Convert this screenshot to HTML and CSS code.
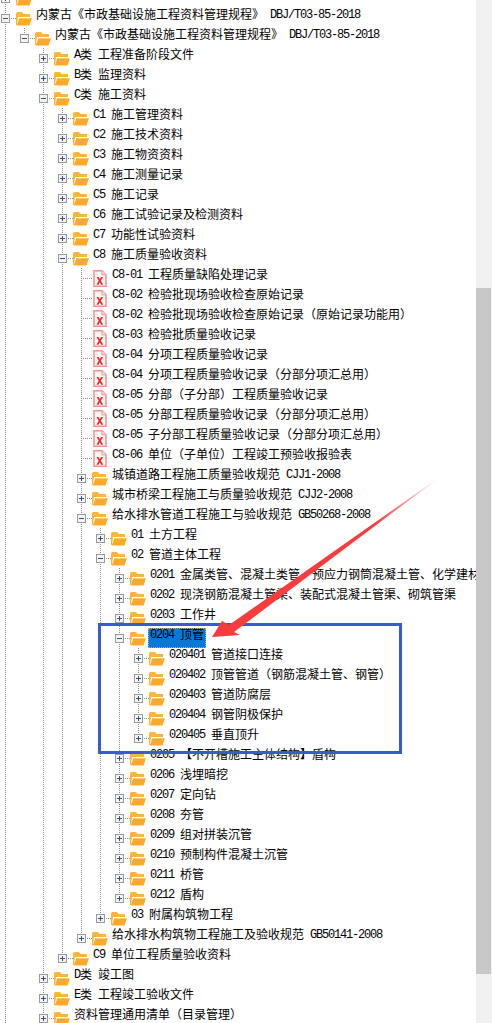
FILE: index.html
```html
<!DOCTYPE html>
<html lang="zh-CN">
<head>
    <meta charset="UTF-8">
    <meta name="viewport" content="width=device-width, initial-scale=1.0">
    <title>资料管理规程</title>
    <link rel="stylesheet" href="styles.css">
</head>
<body>
    <svg class="defs" width="0" height="0">
        <symbol id="plus" viewBox="0 0 9 9"><rect x=".5" y=".5" width="8" height="8" fill="#f4f4f0" stroke="#9a9a9a"/><path d="M2 4.500h5M4.500 2v5" stroke="#33508f"/></symbol>
        <symbol id="minus" viewBox="0 0 9 9"><rect x=".5" y=".5" width="8" height="8" fill="#f4f4f0" stroke="#9a9a9a"/><path d="M2 4.500h5" stroke="#33508f"/></symbol>
        <symbol id="folder" viewBox="0 0 16 14"><path d="M0 1.500 1 0h5l1.500 2H14v3H3.500L1 13H0z" fill="#fdb53c"/><path d="M2 5h12v1H3.400L1.500 12H1z" fill="#fff"/><path d="M3.500 6H16l-2.500 7.500H.8z" fill="#fea92a"/><path d="M3.500 6H16v.7H3.300z" fill="#ffd27e"/></symbol>
        <symbol id="file" viewBox="0 0 14 17"><path d="M1 .8h8l4 4v11.500H1z" fill="#fff6f6" stroke="#f78f8f" stroke-width="1.500"/><path d="M9 .8v4h4" fill="#fde0e0" stroke="#f78f8f"/><path d="M3.500 7h2l1.300 2.300L8.100 7h2L7.900 10.800l2.300 4h-2L6.800 12.300l-1.400 2.500h-2l2.300-4z" fill="#ee2b2b"/></symbol>
    </svg>

    <div class="window">
        <div class="tree-pane">
            <ul class="tree">
                <li><div class="row"><svg class="box"><use href="#plus"/></svg><svg class="folder"><use href="#folder"/></svg></div></li>
                <li>
                    <div class="row"><svg class="box"><use href="#minus"/></svg><svg class="folder"><use href="#folder"/></svg><span class="label">内蒙古《市政基础设施工程资料管理规程》<span class="lat"> DBJ/T03-85-2018</span></span></div>
                    <ul>
                        <li>
                            <div class="row"><svg class="box"><use href="#minus"/></svg><svg class="folder"><use href="#folder"/></svg><span class="label">内蒙古《市政基础设施工程资料管理规程》<span class="lat"> DBJ/T03-85-2018</span></span></div>
                            <ul>
                                <li><div class="row"><svg class="box"><use href="#plus"/></svg><svg class="folder"><use href="#folder"/></svg><span class="label"><span class="lat">A</span>类<span class="lat"> </span>工程准备阶段文件</span></div></li>
                                <li><div class="row"><svg class="box"><use href="#plus"/></svg><svg class="folder"><use href="#folder"/></svg><span class="label"><span class="lat">B</span>类<span class="lat"> </span>监理资料</span></div></li>
                                <li>
                                    <div class="row"><svg class="box"><use href="#minus"/></svg><svg class="folder"><use href="#folder"/></svg><span class="label"><span class="lat">C</span>类<span class="lat"> </span>施工资料</span></div>
                                    <ul>
                                        <li><div class="row"><svg class="box"><use href="#plus"/></svg><svg class="folder"><use href="#folder"/></svg><span class="label"><span class="lat">C1 </span>施工管理资料</span></div></li>
                                        <li><div class="row"><svg class="box"><use href="#plus"/></svg><svg class="folder"><use href="#folder"/></svg><span class="label"><span class="lat">C2 </span>施工技术资料</span></div></li>
                                        <li><div class="row"><svg class="box"><use href="#plus"/></svg><svg class="folder"><use href="#folder"/></svg><span class="label"><span class="lat">C3 </span>施工物资资料</span></div></li>
                                        <li><div class="row"><svg class="box"><use href="#plus"/></svg><svg class="folder"><use href="#folder"/></svg><span class="label"><span class="lat">C4 </span>施工测量记录</span></div></li>
                                        <li><div class="row"><svg class="box"><use href="#plus"/></svg><svg class="folder"><use href="#folder"/></svg><span class="label"><span class="lat">C5 </span>施工记录</span></div></li>
                                        <li><div class="row"><svg class="box"><use href="#plus"/></svg><svg class="folder"><use href="#folder"/></svg><span class="label"><span class="lat">C6 </span>施工试验记录及检测资料</span></div></li>
                                        <li><div class="row"><svg class="box"><use href="#plus"/></svg><svg class="folder"><use href="#folder"/></svg><span class="label"><span class="lat">C7 </span>功能性试验资料</span></div></li>
                                        <li>
                                            <div class="row"><svg class="box"><use href="#minus"/></svg><svg class="folder"><use href="#folder"/></svg><span class="label"><span class="lat">C8 </span>施工质量验收资料</span></div>
                                            <ul>
                                                <li><div class="row leaf"><svg class="file"><use href="#file"/></svg><span class="label"><span class="lat">C8-01 </span>工程质量缺陷处理记录</span></div></li>
                                                <li><div class="row leaf"><svg class="file"><use href="#file"/></svg><span class="label"><span class="lat">C8-02 </span>检验批现场验收检查原始记录</span></div></li>
                                                <li><div class="row leaf"><svg class="file"><use href="#file"/></svg><span class="label"><span class="lat">C8-02 </span>检验批现场验收检查原始记录（原始记录功能用）</span></div></li>
                                                <li><div class="row leaf"><svg class="file"><use href="#file"/></svg><span class="label"><span class="lat">C8-03 </span>检验批质量验收记录</span></div></li>
                                                <li><div class="row leaf"><svg class="file"><use href="#file"/></svg><span class="label"><span class="lat">C8-04 </span>分项工程质量验收记录</span></div></li>
                                                <li><div class="row leaf"><svg class="file"><use href="#file"/></svg><span class="label"><span class="lat">C8-04 </span>分项工程质量验收记录（分部分项汇总用）</span></div></li>
                                                <li><div class="row leaf"><svg class="file"><use href="#file"/></svg><span class="label"><span class="lat">C8-05 </span>分部（子分部）工程质量验收记录</span></div></li>
                                                <li><div class="row leaf"><svg class="file"><use href="#file"/></svg><span class="label"><span class="lat">C8-05 </span>分部工程质量验收记录（分部分项汇总用）</span></div></li>
                                                <li><div class="row leaf"><svg class="file"><use href="#file"/></svg><span class="label"><span class="lat">C8-05 </span>子分部工程质量验收记录（分部分项汇总用）</span></div></li>
                                                <li><div class="row leaf"><svg class="file"><use href="#file"/></svg><span class="label"><span class="lat">C8-06 </span>单位（子单位）工程竣工预验收报验表</span></div></li>
                                                <li><div class="row"><svg class="box"><use href="#plus"/></svg><svg class="folder"><use href="#folder"/></svg><span class="label">城镇道路工程施工质量验收规范<span class="lat"> CJJ1-2008</span></span></div></li>
                                                <li><div class="row"><svg class="box"><use href="#plus"/></svg><svg class="folder"><use href="#folder"/></svg><span class="label">城市桥梁工程施工与质量验收规范<span class="lat"> CJJ2-2008</span></span></div></li>
                                                <li>
                                                    <div class="row"><svg class="box"><use href="#minus"/></svg><svg class="folder"><use href="#folder"/></svg><span class="label">给水排水管道工程施工与验收规范<span class="lat"> GB50268-2008</span></span></div>
                                                    <ul>
                                                        <li><div class="row"><svg class="box"><use href="#plus"/></svg><svg class="folder"><use href="#folder"/></svg><span class="label"><span class="lat">01 </span>土方工程</span></div></li>
                                                        <li>
                                                            <div class="row"><svg class="box"><use href="#minus"/></svg><svg class="folder"><use href="#folder"/></svg><span class="label"><span class="lat">02 </span>管道主体工程</span></div>
                                                            <ul>
                                                                <li><div class="row"><svg class="box"><use href="#plus"/></svg><svg class="folder"><use href="#folder"/></svg><span class="label"><span class="lat">0201 </span>金属类管、混凝土类管、预应力钢筒混凝土管、化学建材管</span></div></li>
                                                                <li><div class="row"><svg class="box"><use href="#plus"/></svg><svg class="folder"><use href="#folder"/></svg><span class="label"><span class="lat">0202 </span>现浇钢筋混凝土管渠、装配式混凝土管渠、砌筑管渠</span></div></li>
                                                                <li><div class="row"><svg class="box"><use href="#plus"/></svg><svg class="folder"><use href="#folder"/></svg><span class="label"><span class="lat">0203 </span>工作井</span></div></li>
                                                                <li>
                                                                    <div class="row"><svg class="box"><use href="#minus"/></svg><svg class="folder"><use href="#folder"/></svg><span class="label selected"><span class="lat">0204 </span>顶管</span></div>
                                                                    <ul>
                                                                        <li><div class="row"><svg class="box"><use href="#plus"/></svg><svg class="folder"><use href="#folder"/></svg><span class="label"><span class="lat">020401 </span>管道接口连接</span></div></li>
                                                                        <li><div class="row"><svg class="box"><use href="#plus"/></svg><svg class="folder"><use href="#folder"/></svg><span class="label"><span class="lat">020402 </span>顶管管道（钢筋混凝土管、钢管）</span></div></li>
                                                                        <li><div class="row"><svg class="box"><use href="#plus"/></svg><svg class="folder"><use href="#folder"/></svg><span class="label"><span class="lat">020403 </span>管道防腐层</span></div></li>
                                                                        <li><div class="row"><svg class="box"><use href="#plus"/></svg><svg class="folder"><use href="#folder"/></svg><span class="label"><span class="lat">020404 </span>钢管阴极保护</span></div></li>
                                                                        <li><div class="row"><svg class="box"><use href="#plus"/></svg><svg class="folder"><use href="#folder"/></svg><span class="label"><span class="lat">020405 </span>垂直顶升</span></div></li>
                                                                    </ul>
                                                                </li>
                                                                <li><div class="row"><svg class="box"><use href="#plus"/></svg><svg class="folder"><use href="#folder"/></svg><span class="label"><span class="lat">0205 </span>【不开槽施工主体结构】盾构</span></div></li>
                                                                <li><div class="row"><svg class="box"><use href="#plus"/></svg><svg class="folder"><use href="#folder"/></svg><span class="label"><span class="lat">0206 </span>浅埋暗挖</span></div></li>
                                                                <li><div class="row"><svg class="box"><use href="#plus"/></svg><svg class="folder"><use href="#folder"/></svg><span class="label"><span class="lat">0207 </span>定向钻</span></div></li>
                                                                <li><div class="row"><svg class="box"><use href="#plus"/></svg><svg class="folder"><use href="#folder"/></svg><span class="label"><span class="lat">0208 </span>夯管</span></div></li>
                                                                <li><div class="row"><svg class="box"><use href="#plus"/></svg><svg class="folder"><use href="#folder"/></svg><span class="label"><span class="lat">0209 </span>组对拼装沉管</span></div></li>
                                                                <li><div class="row"><svg class="box"><use href="#plus"/></svg><svg class="folder"><use href="#folder"/></svg><span class="label"><span class="lat">0210 </span>预制构件混凝土沉管</span></div></li>
                                                                <li><div class="row"><svg class="box"><use href="#plus"/></svg><svg class="folder"><use href="#folder"/></svg><span class="label"><span class="lat">0211 </span>桥管</span></div></li>
                                                                <li><div class="row"><svg class="box"><use href="#plus"/></svg><svg class="folder"><use href="#folder"/></svg><span class="label"><span class="lat">0212 </span>盾构</span></div></li>
                                                            </ul>
                                                        </li>
                                                        <li><div class="row"><svg class="box"><use href="#plus"/></svg><svg class="folder"><use href="#folder"/></svg><span class="label"><span class="lat">03 </span>附属构筑物工程</span></div></li>
                                                    </ul>
                                                </li>
                                                <li><div class="row"><svg class="box"><use href="#plus"/></svg><svg class="folder"><use href="#folder"/></svg><span class="label">给水排水构筑物工程施工及验收规范<span class="lat"> GB50141-2008</span></span></div></li>
                                            </ul>
                                        </li>
                                        <li><div class="row"><svg class="box"><use href="#plus"/></svg><svg class="folder"><use href="#folder"/></svg><span class="label"><span class="lat">C9 </span>单位工程质量验收资料</span></div></li>
                                    </ul>
                                </li>
                                <li><div class="row"><svg class="box"><use href="#plus"/></svg><svg class="folder"><use href="#folder"/></svg><span class="label"><span class="lat">D</span>类<span class="lat"> </span>竣工图</span></div></li>
                                <li><div class="row"><svg class="box"><use href="#plus"/></svg><svg class="folder"><use href="#folder"/></svg><span class="label"><span class="lat">E</span>类<span class="lat"> </span>工程竣工验收文件</span></div></li>
                                <li><div class="row"><svg class="box"><use href="#plus"/></svg><svg class="folder"><use href="#folder"/></svg><span class="label">资料管理通用清单（目录管理）</span></div></li>
                            </ul>
                        </li>
                    </ul>
                </li>
                <li><div class="row"></div></li>
            </ul>
        </div>
        <div class="scrollbar"><div class="thumb"></div></div>

        <!-- markup drawn on top of the screenshot -->
        <div class="callout"></div>
        <svg class="arrow" width="492" height="1023">
            <defs>
                <linearGradient id="fade" gradientUnits="userSpaceOnUse" x1="212" y1="637" x2="444" y2="474">
                    <stop offset=".7" stop-color="#f83b3d"/>
                    <stop offset="1" stop-color="#f83b3d" stop-opacity="0"/>
                </linearGradient>
            </defs>
            <path d="M212 637 222 621 229 625 444 474 234 632 240 635z" fill="url(#fade)"/>
        </svg>
    </div>
</body>
</html>
```

FILE: styles.css
```css
html, body {
    margin: 0;
    padding: 0;
    background-color: #fff;
}
.defs {
    display: block;
    height: 0;
}
.window {
    display: flex;
    position: relative;
    width: 492px;
    height: 1023px;
    overflow: hidden;
}
.tree-pane {
    flex: 1;
    min-width: 0;
    overflow: hidden;
}
.tree {
    margin-top: -12px;
    font-family: "Noto Sans CJK SC", sans-serif;
    font-size: 12px;
    color: #000;
}
.tree, .tree ul {
    list-style: none;
    margin-bottom: 0;
    margin-left: 0;
    margin-right: 0;
    padding: 0;
}
.tree ul {
    margin-top: 0;
    padding-left: 19px;
}
/* dotted guide lines */
.tree li {
    background: repeating-linear-gradient(#8c8c8c 0 1px, transparent 1px 2px) 5px 0 / 1px 100% no-repeat;
}
.tree li:last-child {
    background: none;
}
.row {
    display: flex;
    align-items: center;
    height: 20px;
    white-space: pre;
    background:
        repeating-linear-gradient(90deg, #8c8c8c 0 1px, transparent 1px 2px) 5px 10px / 11px 1px no-repeat;
}
.tree li:last-child > .row {
    background:
        repeating-linear-gradient(90deg, #8c8c8c 0 1px, transparent 1px 2px) 5px 10px / 11px 1px no-repeat,
        repeating-linear-gradient(#8c8c8c 0 1px, transparent 1px 2px) 5px 0 / 1px 10px no-repeat;
}
.box {
    flex: none;
    width: 9px;
    height: 9px;
    margin-left: 1px;
    margin-right: 6px;
}
.folder {
    flex: none;
    width: 16px;
    height: 14px;
    margin-top: 1px;
}
.leaf .file {
    flex: none;
    width: 14px;
    height: 17px;
    margin-left: 17px;
    margin-right: 1px;
}
.label {
    align-self: stretch;
    margin-left: 2px;
    padding: 0 2px;
    line-height: 12px;
}
/* 12px latin squeezed to half of a CJK cell, like the bitmap font */
.lat {
    font-family: "Liberation Mono", monospace;
    font-size: 12px;
    letter-spacing: -1.2px;
    vertical-align: 1px;
}
.selected {
    box-sizing: border-box;
    background-color: #0a78d8;
    outline: 1px dotted #f0a030;
    outline-offset: -1px;
}
.scrollbar {
    flex: none;
    width: 16px;
    background-color: #f0f0f0;
}
.thumb {
    width: 15px;
    height: 686px;
    margin-top: 288px;
    background-color: #c8c8c8;
}
.callout {
    position: absolute;
    left: 98px;
    top: 623px;
    width: 298px;
    height: 125px;
    border: 3px solid #3a5bd0;
}
.arrow {
    position: absolute;
    left: 0;
    top: 0;
    pointer-events: none;
}
```
